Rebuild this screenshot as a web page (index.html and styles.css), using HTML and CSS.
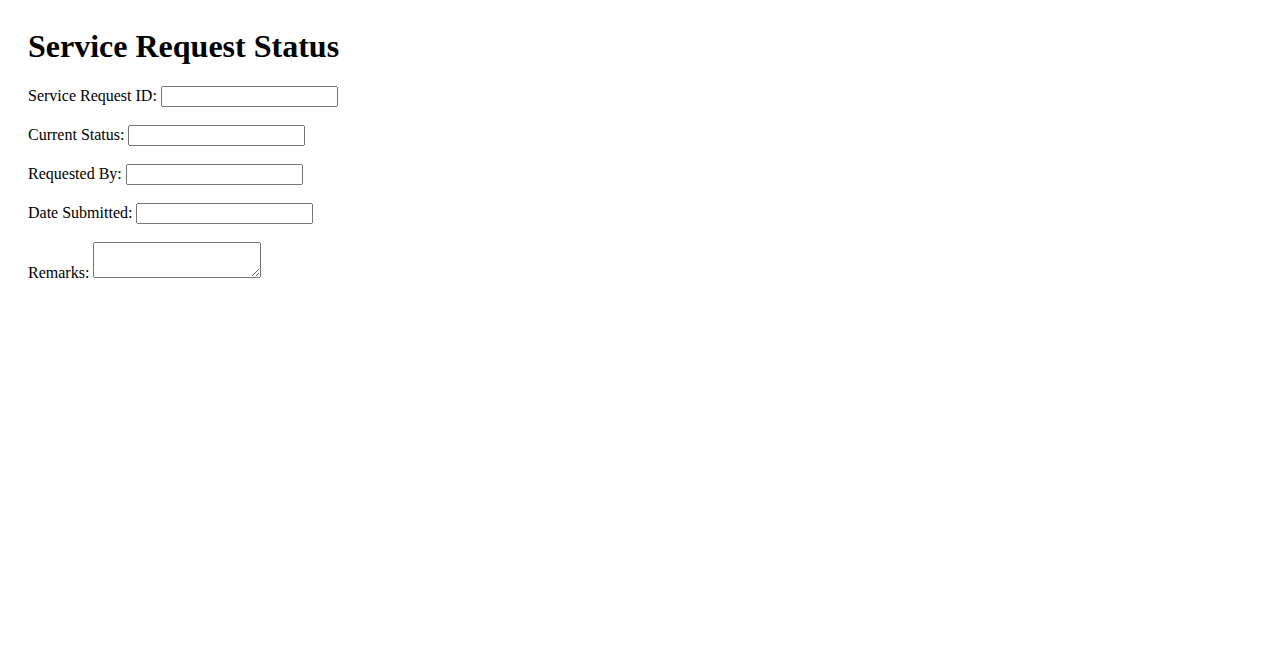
FILE: index.html
```html
<!DOCTYPE html>
<html>
<head>
<meta charset="utf-8">
<title>Service Request Status</title>
<link rel="stylesheet" href="styles.css">
</head>
<body>
<div class="page">
<h1 class="title">Service Request Status</h1>
<form class="form">
  <div class="field"><label for="srid">Service Request ID:</label> <input class="input" type="text" id="srid"></div>
  <div class="field"><label for="status">Current Status:</label> <input class="input" type="text" id="status"></div>
  <div class="field"><label for="by">Requested By:</label> <input class="input" type="text" id="by"></div>
  <div class="field"><label for="date">Date Submitted:</label> <input class="input" type="text" id="date"></div>
  <div class="field"><label for="remarks">Remarks:</label> <textarea class="textarea" id="remarks"></textarea></div>
</form>
</div>
</body>
</html>
```
FILE: styles.css
```css
body {
  margin: 8px;
  font-family: "Liberation Serif", "Times New Roman", serif;
}
.page {
  padding: 20px;
}
.title {
  font-size: 32px;
  margin: 0 0 21px 0;
}
.field {
  margin-bottom: 18px;
}
.input {
  box-sizing: border-box;
  width: 177px;
}
.textarea {
  box-sizing: border-box;
  width: 168px;
  height: 36px;
}
```
